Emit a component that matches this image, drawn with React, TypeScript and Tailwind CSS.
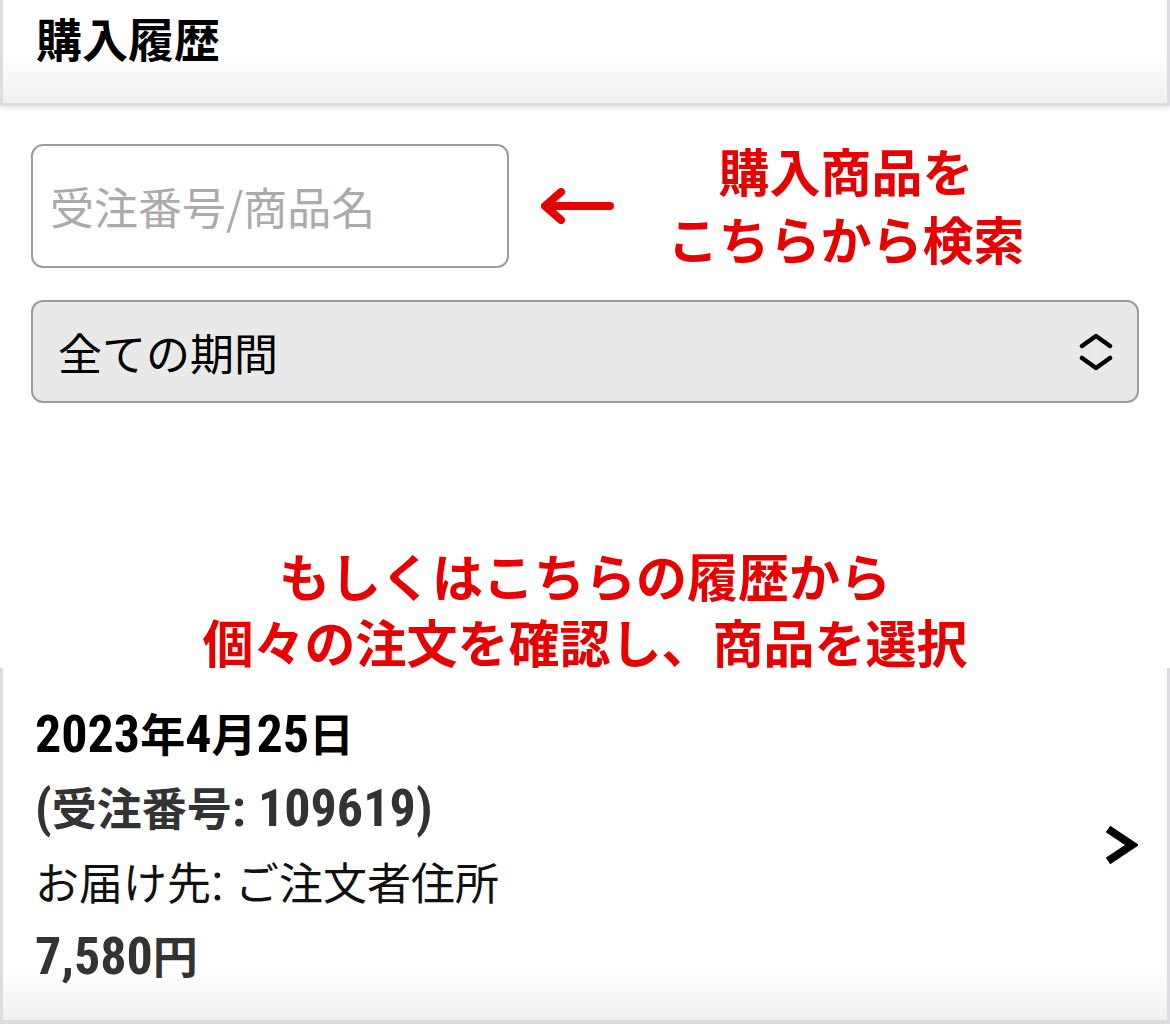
import React from "react";

// latin glyphs (digits, colon, parens) are narrower and taller than the CJK ones
function N({ children }: { children: React.ReactNode }) {
  return (
    <span className="font-['Roboto_Condensed','Roboto','Noto_Sans_CJK_JP',sans-serif] font-stretch-condensed text-[52px]">
      {children}
    </span>
  );
}

function App() {
  return (
    <div className="min-h-screen bg-white font-['Noto_Sans_CJK_JP',sans-serif] text-black">
      {/* header */}
      <div className="h-[106px] border-x-[3px] border-b-[3px] border-[#dcdce1] bg-gradient-to-b from-white from-50% to-[#f1f1f1] shadow-[0_3px_4px_rgba(0,0,0,0.08)] pl-[33px] pt-[14px]">
        <h1 className="text-[46px] font-bold leading-none">購入履歴</h1>
      </div>

      {/* search */}
      <div className="px-[31px] pt-[38px]">
        <div className="flex items-center">
          <input
            type="text"
            placeholder="受注番号/商品名"
            className="h-[124px] w-[478px] rounded-[12px] border-2 border-[#9c9c9c] bg-white pl-[17px] text-[44px] outline-none placeholder:text-[#ababab]"
          />
          <svg width="74" height="36" viewBox="0 0 74 36" className="ml-[31px]">
            <path
              d="M70 18 H6 M21 4 L5 18 L21 32"
              fill="none"
              stroke="#e60000"
              strokeWidth="8"
              strokeLinecap="round"
              strokeLinejoin="round"
            />
          </svg>
          <p className="-my-[6px] ml-[42px] w-[380px] -translate-y-[2px] text-center text-[51px] font-bold leading-[68px] whitespace-nowrap text-[#e60000]">
            購入商品を
            <br />
            こちらから検索
          </p>
        </div>

        <div className="mt-[32px] flex h-[103px] items-center justify-between rounded-[12px] border-2 border-[#9c9c9c] bg-[#e9e9e9] pl-[25px] pr-[24px]">
          <span className="text-[44px] leading-none">全ての期間</span>
          <svg width="34" height="42" viewBox="0 0 34 42">
            <path
              d="M3 15 L17 5 L31 15 M3 27 L17 37 L31 27"
              fill="none"
              stroke="#000"
              strokeWidth="4.5"
              strokeLinecap="round"
              strokeLinejoin="round"
            />
          </svg>
        </div>
      </div>

      {/* guide text */}
      <p className="mt-[139px] text-center text-[51px] font-bold leading-[66px] whitespace-nowrap text-[#e60000]">
        もしくはこちらの履歴から
        <br />
        個々の注文を確認し、商品を選択
      </p>

      {/* order */}
      <div className="-mt-[6px] flex items-center justify-between border-x-[3px] border-b-[4px] border-[#dcdce1] bg-gradient-to-b from-white from-85% to-[#f1f1f1] pb-[27px] pl-[32px] pr-[29px] pt-[29px]">
        <div className="text-[45px] leading-[72px]">
          <div className="font-bold text-black">
            <N>2023</N>年<N>4</N>月<N>25</N>日
          </div>
          <div className="font-bold text-[#333]">
            <N>(</N>受注番号<N>: 109619)</N>
          </div>
          <div className="text-[44px] text-[#111]">
            お届け先<N>: </N>ご注文者住所
          </div>
          <div className="font-bold text-[#333]">
            <N>7,580</N>円
          </div>
        </div>
        <svg width="34" height="44" viewBox="0 0 34 44">
          <path d="M4 6 L28 22 L4 38" fill="none" stroke="#000" strokeWidth="8" strokeLinejoin="miter" />
        </svg>
      </div>
    </div>
  );
}

export default App;
